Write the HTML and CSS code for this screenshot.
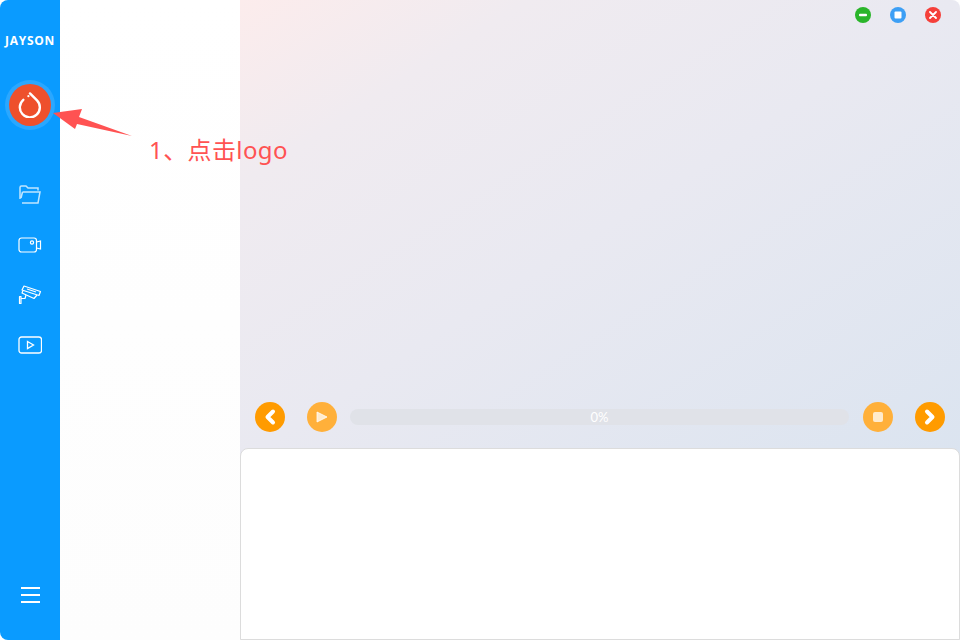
FILE: index.html
```html
<!DOCTYPE html>
<html lang="en">
<head>
    <meta charset="UTF-8">
    <title>JAYSON</title>
    <link rel="stylesheet" href="styles.css">
</head>
<body>
    <div class="window">
        <aside class="sidebar">
            <div class="brand">JAYSON</div>
            <div class="logo">
                <svg width="26" height="26" viewBox="0 0 26 26" fill="none" stroke="#fff" stroke-width="2.4" stroke-linecap="round">
                    <path d="M13 1.4 L20 8.4 A10 10 0 1 1 6.3 7.8"/>
                    <circle cx="11.4" cy="4.2" r="1.1" fill="#fff" stroke="none"/>
                </svg>
            </div>
            <nav class="nav">
                <div class="nav-item">
                    <svg width="24" height="20" viewBox="0 0 24 20" fill="none" stroke="#fff" stroke-width="1.5">
                        <path stroke-opacity=".75" d="M2 14 V2.5 Q2 1 3.5 1 H8 L10 3 H20 V5.5"/>
                        <path stroke-opacity=".75" d="M4.5 7 H22 L20 18 H4 M4.5 7 L3 13"/>
                    </svg>
                </div>
                <div class="nav-item">
                    <svg width="24" height="16" viewBox="0 0 24 16" fill="none" stroke="#fff" stroke-width="1.2">
                        <rect x="1" y="1" width="17.5" height="14" rx="2.5"/>
                        <path d="M18.5 5 L22.5 4 V12 L18.5 11"/>
                        <circle cx="14" cy="5.5" r="1.6"/>
                    </svg>
                </div>
                <div class="nav-item">
                    <svg width="24" height="20" viewBox="0 0 24 20" fill="none" stroke="#fff" stroke-width="1.2" stroke-linejoin="round">
                        <path d="M6 1 L22.5 6.5 L21 10.5 L4 5 Z"/>
                        <path d="M5 5.5 L4 8 L16 13.5 L19 10"/>
                        <path d="M9 4 L18 7"/>
                        <path d="M8 10 L7 13.5 H3 V18.5 H1.5 V11.5 H3 V13.5"/>
                    </svg>
                </div>
                <div class="nav-item">
                    <svg width="24" height="18" viewBox="0 0 24 18" fill="none" stroke="#fff" stroke-width="1.3">
                        <rect x="1" y="1" width="22.5" height="16" rx="2.5"/>
                        <path d="M9.5 5.5 L15.5 9 L9.5 12.5 Z"/>
                    </svg>
                </div>
            </nav>
            <div class="menu">
                <span></span>
                <span></span>
                <span></span>
            </div>
        </aside>
        <div class="list-panel"></div>
        <main class="main">
            <div class="titlebar">
                <span class="win-btn green"><svg width="8" height="8" viewBox="0 0 8 8"><rect x="0" y="2.8" width="8" height="2.4" rx="1" fill="#fff"/></svg></span>
                <span class="win-btn blue"><svg width="8" height="8" viewBox="0 0 8 8"><rect x="0.5" y="0.5" width="7" height="7" rx="1" fill="#fff"/></svg></span>
                <span class="win-btn red"><svg width="8" height="8" viewBox="0 0 8 8"><path d="M1 1 L7 7 M7 1 L1 7" stroke="#fff" stroke-width="1.8" stroke-linecap="round"/></svg></span>
            </div>
            <div class="stage"></div>
            <div class="controls">
                <span class="ctl">
                    <svg width="14" height="18" viewBox="0 0 14 18"><path d="M10 3.5 L4.5 9 L10 14.5" fill="none" stroke="#fff" stroke-width="4" stroke-linecap="round" stroke-linejoin="round"/></svg>
                </span>
                <span class="ctl faded play">
                    <svg width="12" height="12" viewBox="0 0 12 12"><path d="M1 1 L11 6 L1 11 Z" fill="#fff" fill-opacity=".75" stroke="#fff" stroke-opacity=".75" stroke-linejoin="round"/></svg>
                </span>
                <div class="progress">0%</div>
                <span class="ctl faded stop">
                    <svg width="10" height="10" viewBox="0 0 10 10"><rect width="10" height="10" rx="2" fill="#fff" fill-opacity=".75"/></svg>
                </span>
                <span class="ctl">
                    <svg width="14" height="18" viewBox="0 0 14 18"><path d="M4 3.5 L9.5 9 L4 14.5" fill="none" stroke="#fff" stroke-width="4" stroke-linecap="round" stroke-linejoin="round"/></svg>
                </span>
            </div>
            <div class="console"></div>
        </main>
    </div>

    <!-- annotation drawn over the screenshot -->
    <svg class="arrow" width="90" height="40" viewBox="0 0 90 40">
        <path d="M0 5 L29 1 L26 9 L79 28 L24 16 L22 21 Z" fill="#ff5252"/>
    </svg>
    <div class="note">1、点击logo</div>
</body>
</html>
```

FILE: styles.css
```css
* {
    box-sizing: border-box;
}
body {
    margin: 0;
    width: 960px;
    height: 640px;
    overflow: hidden;
    background: #fff;
    font-family: "Liberation Sans", "Noto Sans CJK SC", sans-serif;
}
.window {
    display: flex;
    height: 640px;
}
.sidebar {
    width: 60px;
    background: #0a9bff;
    border-radius: 8px 0 0 8px;
    display: flex;
    flex-direction: column;
    align-items: center;
}
.brand {
    margin-top: 33px;
    color: #fff;
    font-family: "Open Sans", sans-serif;
    font-size: 12px;
    font-weight: 700;
    letter-spacing: 0.7px;
    line-height: 16px;
}
.logo {
    margin-top: 35px;
    width: 42px;
    height: 42px;
    border-radius: 50%;
    background: #ee502c;
    box-shadow: 0 0 0 4px #2aa7ff;
    display: flex;
    align-items: center;
    justify-content: center;
}
.nav {
    margin-top: 44px;
    display: flex;
    flex-direction: column;
}
.nav-item {
    height: 50px;
    display: flex;
    align-items: center;
    justify-content: center;
}
.menu {
    margin-top: auto;
    margin-bottom: 37px;
    width: 19px;
    display: flex;
    flex-direction: column;
    gap: 5px;
}
.menu span {
    height: 2px;
    background: #fff;
}
.list-panel {
    width: 180px;
    background: linear-gradient(#fff, #fdfdfd);
}
.main {
    flex: 1;
    display: flex;
    flex-direction: column;
    background: linear-gradient(to bottom right, #fcecec, #f0ebf0 20%, #e9e9f1 50%, #dbe4f0);
    background-size: 100% 460px;
    border-radius: 0 8px 0 0;
}
.titlebar {
    height: 30px;
    display: flex;
    align-items: flex-start;
    justify-content: flex-end;
    gap: 19px;
    padding: 7px 19px 0 0;
}
.win-btn {
    width: 16px;
    height: 16px;
    border-radius: 50%;
    display: flex;
    align-items: center;
    justify-content: center;
}
.green {
    background: #2ab52a;
}
.blue {
    background: #3d9ff5;
}
.red {
    background: #f5403a;
}
.stage {
    flex: 1;
}
.controls {
    display: flex;
    align-items: center;
    padding: 0 15px;
    height: 30px;
    margin-bottom: 16px;
}
.ctl {
    width: 30px;
    height: 30px;
    border-radius: 50%;
    background: #ff9b00;
    display: flex;
    align-items: center;
    justify-content: center;
    flex-shrink: 0;
}
.ctl.faded {
    background: #ffb03a;
}
.play {
    margin-left: 22px;
}
.stop {
    margin-right: 22px;
}
.progress {
    flex: 1;
    margin: 0 14px 0 13px;
    height: 16px;
    border-radius: 8px;
    background: #e0e2e8;
    color: #fff;
    font-family: Lato, sans-serif;
    font-size: 13px;
    line-height: 16px;
    text-align: center;
}
.console {
    height: 192px;
    background: #fff;
    border: 1px solid #dcdcdc;
    border-radius: 8px 8px 0 0;
}
.arrow {
    position: absolute;
    left: 53px;
    top: 108px;
}
.note {
    position: absolute;
    left: 149px;
    top: 134px;
    color: #ff5252;
    font-family: "Noto Sans", "Noto Sans CJK SC", sans-serif;
    font-size: 24px;
    letter-spacing: 0.4px;
    line-height: 32px;
    white-space: nowrap;
}
```
